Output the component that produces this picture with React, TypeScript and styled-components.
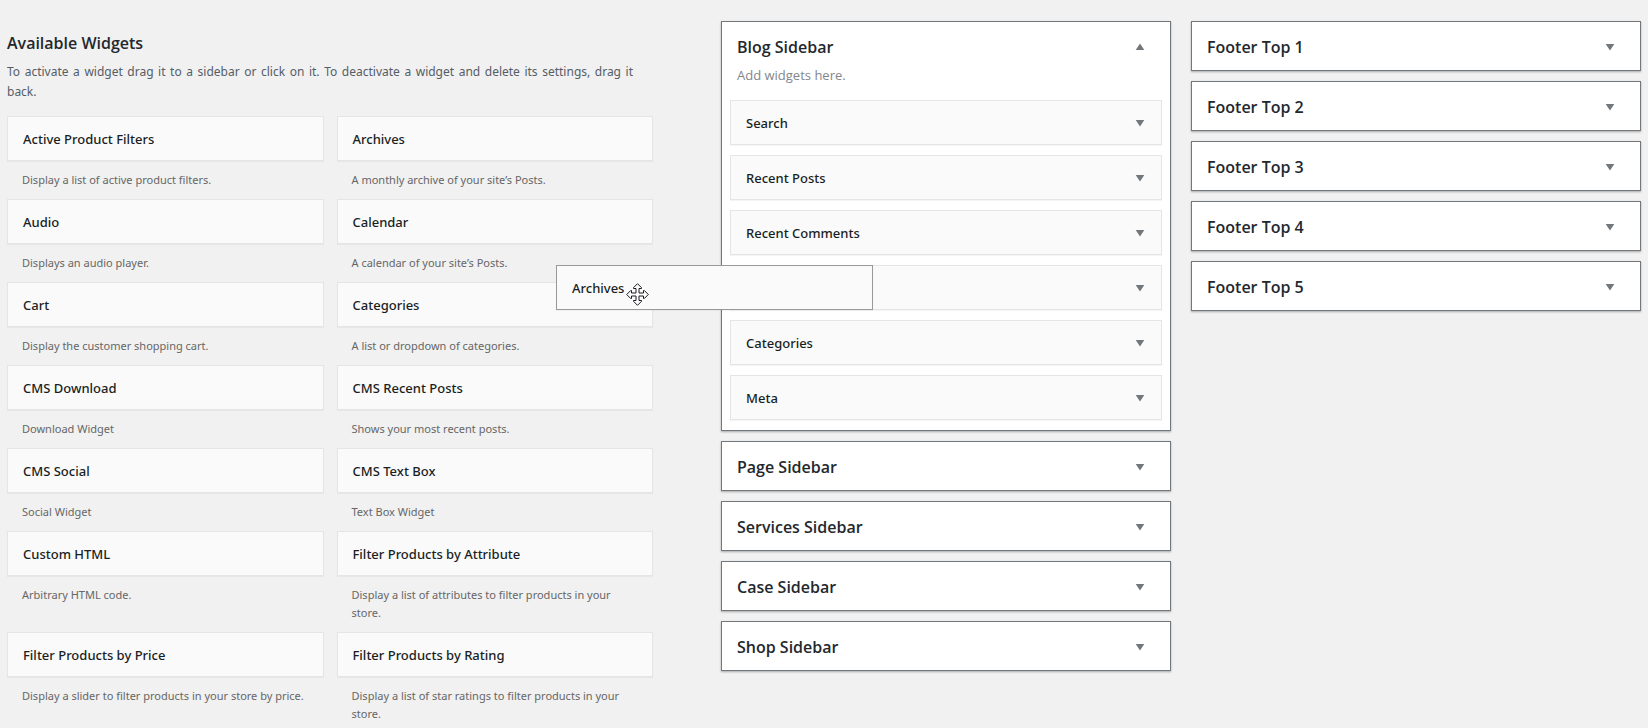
import React from "react";
import styled, { createGlobalStyle } from "styled-components";

const GlobalStyle = createGlobalStyle`
  * { box-sizing: border-box; }
  body {
    margin: 0;
    background: #f1f1f1;
    color: #23282d;
    font-family: "Segoe UI", "Open Sans", "Noto Sans", sans-serif;
    font-size: 13px;
  }
  h2, h3, p, ul { margin: 0; padding: 0; }
  ul { list-style: none; }
`;

const Page = styled.main`
  display: grid;
  grid-template-columns: 714fr 920fr;
  align-items: start;
  padding: 21px 7px 0;
`;

const Available = styled.section`
  min-width: 0;
  padding: 10px 68px 0 0;
`;

const AvailableTitle = styled.h2`
  font-size: 16px;
  font-weight: 600;
  line-height: 24px;
`;

const Intro = styled.p`
  padding: 7px 20px 0 0;
  color: #555d66;
  font-family: "Segoe UI", "Noto Sans", sans-serif;
  font-size: 12px;
  line-height: 20px;
  text-align: justify;
`;

const WidgetGrid = styled.ul`
  display: grid;
  grid-template-columns: 1fr 1fr;
  column-gap: 13px;
  padding-top: 14px;
`;

const Card = styled.div<{ $dragging?: boolean }>`
  display: flex;
  align-items: center;
  justify-content: space-between;
  height: 45px;
  padding: 0 16px 0 15px;
  background: #fafafa;
  border: 1px solid ${(p) => (p.$dragging ? "#999" : "#e5e5e5")};
  box-shadow: 0 1px 1px rgba(0, 0, 0, 0.04);
`;

const CardTitle = styled.h3`
  font-family: "Segoe UI", "Noto Sans", sans-serif;
  font-size: 13px;
  font-weight: 500;
  line-height: 18px;
  color: #191e23;
`;

const CardNote = styled.p`
  padding: 10px 15px;
  color: #666;
  font-family: "Segoe UI", "Noto Sans", sans-serif;
  font-size: 11px;
  line-height: 18px;
`;

const Areas = styled.section`
  min-width: 0;
  display: grid;
  grid-template-columns: 1fr 1fr;
  column-gap: 20px;
  align-items: start;
`;

const AreaColumn = styled.div`
  display: flex;
  flex-direction: column;
  gap: 10px;
`;

const Panel = styled.section`
  background: #fff;
  border: 1px solid #72777c;
  box-shadow: 0 1px 2px rgba(0, 0, 0, 0.3);
`;

const PanelHead = styled.div<{ $open?: boolean }>`
  display: flex;
  align-items: center;
  justify-content: space-between;
  padding: 13px 25px ${(p) => (p.$open ? 8 : 11)}px 15px;
`;

const PanelTitle = styled.h2`
  font-size: 16px;
  font-weight: 600;
  line-height: 24px;
`;

const PanelNote = styled.p`
  padding: 0 15px 17px;
  color: #82878c;
  font-size: 13px;
  line-height: 16px;
`;

const PanelList = styled.ul`
  display: flex;
  flex-direction: column;
  gap: 10px;
  padding: 0 8px 10px;
`;

const PanelItem = styled.li`
  position: relative;
`;

const Toggle = styled.button`
  display: flex;
  padding: 0;
  border: 0;
  background: none;
  color: #72777c;
  cursor: pointer;
`;

const Dragged = styled.div`
  position: absolute;
  z-index: 1;
  top: 0;
  left: -174px;
  width: 317px;
`;

const Pointer = styled.svg`
  position: absolute;
  top: 18px;
  left: 70px;
`;

function Arrow({ open, label }: { open?: boolean; label: string }) {
  return (
    <Toggle type="button" aria-label={label} aria-expanded={!!open}>
      <svg width="10" height="8" viewBox="0 0 10 8" fill="currentColor">
        <path d={open ? "M5 0.5L9.3 7H0.7Z" : "M0.7 1H9.3L5 7.5Z"} />
      </svg>
    </Toggle>
  );
}

function MovePointer() {
  return (
    <Pointer width="23" height="23" viewBox="0 0 23 23">
      <path
        d="M11.5 .7L15.5 4.7V5.5H13V10H17.5V7.5H18.3L22.3 11.5L18.3 15.5H17.5V13H13V17.5H15.5V18.3L11.5 22.3L7.5 18.3V17.5H10V13H5.5V15.5H4.7L.7 11.5L4.7 7.5H5.5V10H10V5.5H7.5V4.7Z"
        fill="#fff"
        stroke="#1a1a22"
      />
    </Pointer>
  );
}

const widgets = [
  ["Active Product Filters", "Display a list of active product filters."],
  ["Archives", "A monthly archive of your site’s Posts."],
  ["Audio", "Displays an audio player."],
  ["Calendar", "A calendar of your site’s Posts."],
  ["Cart", "Display the customer shopping cart."],
  ["Categories", "A list or dropdown of categories."],
  ["CMS Download", "Download Widget"],
  ["CMS Recent Posts", "Shows your most recent posts."],
  ["CMS Social", "Social Widget"],
  ["CMS Text Box", "Text Box Widget"],
  ["Custom HTML", "Arbitrary HTML code."],
  ["Filter Products by Attribute", "Display a list of attributes to filter products in your store."],
  ["Filter Products by Price", "Display a slider to filter products in your store by price."],
  ["Filter Products by Rating", "Display a list of star ratings to filter products in your store."],
];

const blogWidgets = ["Search", "Recent Posts", "Recent Comments", "Archives", "Categories", "Meta"];
const sidebars = ["Page Sidebar", "Services Sidebar", "Case Sidebar", "Shop Sidebar"];
const footers = ["Footer Top 1", "Footer Top 2", "Footer Top 3", "Footer Top 4", "Footer Top 5"];

function ClosedPanel({ title }: { title: string }) {
  return (
    <Panel>
      <PanelHead>
        <PanelTitle>{title}</PanelTitle>
        <Arrow label={`Expand ${title}`} />
      </PanelHead>
    </Panel>
  );
}

export default function App() {
  return (
    <>
      <GlobalStyle />
      <Page>
        <Available>
          <AvailableTitle>Available Widgets</AvailableTitle>
          <Intro>
            To activate a widget drag it to a sidebar or click on it. To deactivate a widget and
            delete its settings, drag it back.
          </Intro>
          <WidgetGrid>
            {widgets.map(([title, note]) => (
              <li key={title}>
                <Card>
                  <CardTitle>{title}</CardTitle>
                </Card>
                <CardNote>{note}</CardNote>
              </li>
            ))}
          </WidgetGrid>
        </Available>
        <Areas>
          <AreaColumn>
            <Panel>
              <PanelHead $open>
                <PanelTitle>Blog Sidebar</PanelTitle>
                <Arrow open label="Collapse Blog Sidebar" />
              </PanelHead>
              <PanelNote>Add widgets here.</PanelNote>
              <PanelList>
                {blogWidgets.map((title) => (
                  <PanelItem key={title}>
                    <Card>
                      <CardTitle>{title}</CardTitle>
                      <Arrow label={`Edit ${title}`} />
                    </Card>
                    {title === "Archives" && (
                      <Dragged>
                        <Card $dragging>
                          <CardTitle>{title}</CardTitle>
                        </Card>
                        <MovePointer />
                      </Dragged>
                    )}
                  </PanelItem>
                ))}
              </PanelList>
            </Panel>
            {sidebars.map((title) => (
              <ClosedPanel key={title} title={title} />
            ))}
          </AreaColumn>
          <AreaColumn>
            {footers.map((title) => (
              <ClosedPanel key={title} title={title} />
            ))}
          </AreaColumn>
        </Areas>
      </Page>
    </>
  );
}
